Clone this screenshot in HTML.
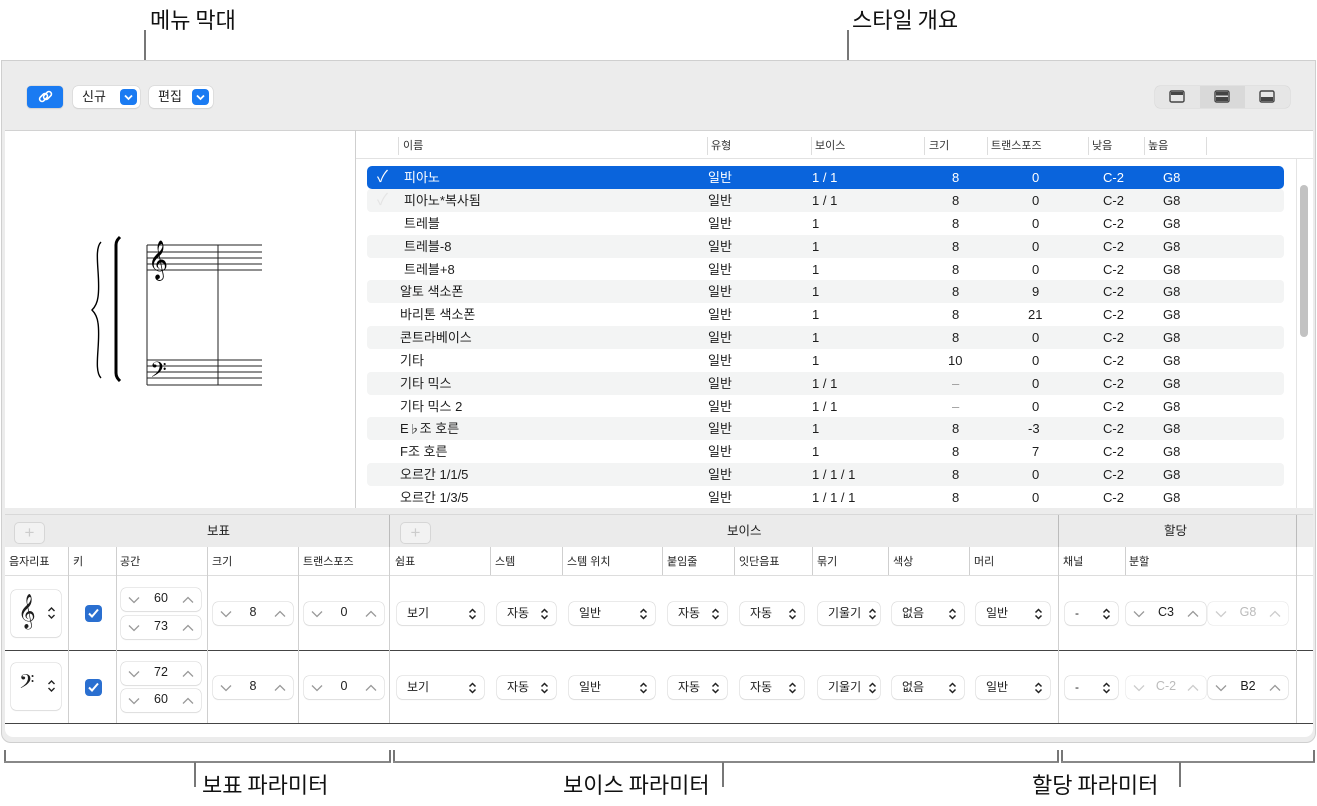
<!DOCTYPE html>
<html><head><meta charset="utf-8"><style>
*{box-sizing:border-box;margin:0;padding:0}
body{width:1317px;height:806px;background:#fff;position:relative;overflow:hidden;font-family:"Liberation Sans","Noto Sans CJK KR",sans-serif;color:#1d1d1d;font-size:12px;line-height:15px}
.a{position:absolute}
.call{position:absolute;font-size:22px;color:#111;font-family:"Noto Sans CJK KR",sans-serif;line-height:26px}
.vl{position:absolute;width:2px;background:#777}
.hl{position:absolute;height:2px;background:#888}
.win{position:absolute;left:1px;top:60px;width:1315px;height:683px;background:#ececec;border:1px solid #cfcfcf;border-radius:0 0 10px 10px}
.btn{position:absolute;background:#fff;border-radius:5px;box-shadow:0 0 0 0.5px #d0d0d0,0 1px 1px rgba(0,0,0,.12);font-size:13px;line-height:16px}
.blue{background:#1a7bf2;border-radius:4px}
.row{position:absolute;left:367px;width:917px;height:23px;font-size:13px;line-height:23px}
.row span{position:absolute;top:0}
.hd{position:absolute;top:139px;font-size:11px;color:#333;line-height:14px}
.sep{position:absolute;width:1px;background:#ddd}
.th{position:absolute;top:555px;font-size:11px;color:#222;line-height:14px}
.cv{position:absolute;width:1px;background:#cfcfcf}
.st{position:absolute;height:23px;background:#fff;border-radius:5px;box-shadow:0 0 0 0.5px #d4d4d4,0 1px 1px rgba(0,0,0,.1);font-size:12.5px;line-height:20px}
.st .v{position:absolute;width:100%;text-align:center;top:0}
.st svg{position:absolute;top:8px}
.pp{position:absolute;height:23px;background:#fff;border-radius:5px;box-shadow:0 0 0 0.5px #d4d4d4,0 1px 1px rgba(0,0,0,.1);font-size:12px;line-height:23px}
.pp .t{position:absolute;left:10px;top:0}
.pp svg{position:absolute;right:7px;top:6px}
.cb{position:absolute;width:17px;height:17px;background:#2a6fd0;border-radius:4px}
.sh{position:absolute;top:518px;font-size:12.5px;line-height:26px}
</style></head><body>

<div class="call" style="left:150px;top:6px">메뉴 막대</div>
<div class="vl" style="left:144px;top:30px;height:31px"></div>
<div class="call" style="left:852px;top:6px">스타일 개요</div>
<div class="vl" style="left:847px;top:30px;height:100px"></div>

<div class="win"></div>
<div class="btn blue" style="left:27px;top:86px;width:36px;height:22px"><svg width="36" height="22" viewBox="0 0 36 22"><g fill="none" stroke="#fff" stroke-width="1.6"><rect x="12" y="9" width="9" height="5" rx="2.5" transform="rotate(-45 16.5 11.5)"/><rect x="16" y="7" width="9" height="5" rx="2.5" transform="rotate(-45 20.5 9.5)"/></g></svg></div>
<div class="btn" style="left:73px;top:86px;width:67px;height:22px"><span class="a" style="left:9px;top:3px">신규</span><div class="a blue" style="left:47px;top:3px;width:17px;height:16px"><svg width="17" height="16"><path d="M5 6.5l3.5 3.5 3.5-3.5" stroke="#fff" stroke-width="1.8" fill="none"/></svg></div></div>
<div class="btn" style="left:149px;top:86px;width:64px;height:22px"><span class="a" style="left:9px;top:3px">편집</span><div class="a blue" style="left:43px;top:3px;width:17px;height:16px"><svg width="17" height="16"><path d="M5 6.5l3.5 3.5 3.5-3.5" stroke="#fff" stroke-width="1.8" fill="none"/></svg></div></div>
<div class="a" style="left:1155px;top:86px;width:135px;height:22px;background:#e6e6e6;border-radius:5px;box-shadow:0 0 0 0.5px #d6d6d6"></div>
<div class="a" style="left:1200px;top:86px;width:45px;height:22px;background:#d9d9d9"></div>
<svg class="a" style="left:1168px;top:89px" width="112" height="16"><g fill="none" stroke="#444" stroke-width="1.4"><rect x="2" y="2" width="14" height="11" rx="1.5"/><rect x="47" y="2" width="14" height="11" rx="1.5"/><rect x="92" y="2" width="14" height="11" rx="1.5"/></g><rect x="3" y="3" width="12" height="3" fill="#444"/><rect x="48" y="3" width="12" height="3.5" fill="#444"/><rect x="48" y="8" width="12" height="4" fill="#444"/><rect x="93" y="8" width="12" height="4" fill="#444"/></svg>

<div class="a" style="left:5px;top:130px;width:1308px;height:378px;background:#fff;border-top:1px solid #d2d2d2"></div>
<div class="a" style="left:355px;top:130px;width:1px;height:378px;background:#cfcfcf"></div>
<div class="a" style="left:356px;top:158px;width:957px;height:1px;background:#e2e2e2"></div>
<svg class="a" style="left:80px;top:225px" width="190" height="170" viewBox="0 0 190 170">
<path d="M21 17c-8 8 0 35-3 55c-1 8-5 12-6 13c1 1 5 5 6 13c3 20-5 47 3 55" fill="none" stroke="#000" stroke-width="1.4"/>
<path d="M40 12c-2 2-4 4-4 8v128c0 4 2 6 4 8" fill="none" stroke="#000" stroke-width="3"/>
<g stroke="#222" stroke-width="1"><line x1="67" y1="20" x2="67" y2="160"/><line x1="138" y1="20" x2="138" y2="160"/>
<line x1="67" y1="20" x2="182" y2="20"/><line x1="67" y1="27" x2="182" y2="27"/><line x1="67" y1="33" x2="182" y2="33"/><line x1="67" y1="39" x2="182" y2="39"/><line x1="67" y1="45" x2="182" y2="45"/>
<line x1="67" y1="135" x2="182" y2="135"/><line x1="67" y1="141" x2="182" y2="141"/><line x1="67" y1="147" x2="182" y2="147"/><line x1="67" y1="153" x2="182" y2="153"/><line x1="67" y1="160" x2="182" y2="160"/></g>
<text x="68" y="46" font-size="34" font-family="DejaVu Sans">𝄞</text>
<text x="70" y="156" font-size="26" font-family="DejaVu Sans">𝄢</text>
</svg>

<div class="hd" style="left:403px">이름</div><div class="hd" style="left:711px">유형</div><div class="hd" style="left:815px">보이스</div><div class="hd" style="left:929px">크기</div><div class="hd" style="left:991px">트랜스포즈</div><div class="hd" style="left:1092px">낮음</div><div class="hd" style="left:1148px">높음</div>
<div class="sep" style="left:398px;top:137px;height:18px"></div><div class="sep" style="left:707px;top:137px;height:18px"></div><div class="sep" style="left:811px;top:137px;height:18px"></div><div class="sep" style="left:924px;top:137px;height:18px"></div><div class="sep" style="left:987px;top:137px;height:18px"></div><div class="sep" style="left:1088px;top:137px;height:18px"></div><div class="sep" style="left:1144px;top:137px;height:18px"></div><div class="sep" style="left:1206px;top:137px;height:18px"></div>
<div class="a" style="left:1296px;top:159px;width:1px;height:349px;background:#e4e4e4"></div>
<div class="a" style="left:1300px;top:185px;width:8px;height:152px;background:#c2c2c2;border-radius:4px"></div>

<div class="row" style="top:166px;background:#0a64dc;border-radius:5px;color:#fff"><span style="left:10px;font-size:16px">✓</span><span style="left:37px">피아노</span><span style="left:341px">일반</span><span style="left:445px">1 / 1</span><span style="left:585px">8</span><span style="left:665px">0</span><span style="left:736px">C-2</span><span style="left:796px">G8</span></div>
<div class="row" style="top:189px;background:#f3f4f4;border-radius:4px"><span style="left:10px;font-size:16px;color:#e4e4e4">✓</span><span style="left:37px">피아노*복사됨</span><span style="left:341px">일반</span><span style="left:445px">1 / 1</span><span style="left:585px">8</span><span style="left:665px">0</span><span style="left:736px">C-2</span><span style="left:796px">G8</span></div>
<div class="row" style="top:212px"><span style="left:37px">트레블</span><span style="left:341px">일반</span><span style="left:445px">1</span><span style="left:585px">8</span><span style="left:665px">0</span><span style="left:736px">C-2</span><span style="left:796px">G8</span></div>
<div class="row" style="top:235px;background:#f3f4f4;border-radius:4px"><span style="left:37px">트레블-8</span><span style="left:341px">일반</span><span style="left:445px">1</span><span style="left:585px">8</span><span style="left:665px">0</span><span style="left:736px">C-2</span><span style="left:796px">G8</span></div>
<div class="row" style="top:258px"><span style="left:37px">트레블+8</span><span style="left:341px">일반</span><span style="left:445px">1</span><span style="left:585px">8</span><span style="left:665px">0</span><span style="left:736px">C-2</span><span style="left:796px">G8</span></div>
<div class="row" style="top:280px;background:#f3f4f4;border-radius:4px"><span style="left:33px">알토 색소폰</span><span style="left:341px">일반</span><span style="left:445px">1</span><span style="left:585px">8</span><span style="left:665px">9</span><span style="left:736px">C-2</span><span style="left:796px">G8</span></div>
<div class="row" style="top:303px"><span style="left:33px">바리톤 색소폰</span><span style="left:341px">일반</span><span style="left:445px">1</span><span style="left:585px">8</span><span style="left:661px">21</span><span style="left:736px">C-2</span><span style="left:796px">G8</span></div>
<div class="row" style="top:326px;background:#f3f4f4;border-radius:4px"><span style="left:33px">콘트라베이스</span><span style="left:341px">일반</span><span style="left:445px">1</span><span style="left:585px">8</span><span style="left:665px">0</span><span style="left:736px">C-2</span><span style="left:796px">G8</span></div>
<div class="row" style="top:349px"><span style="left:33px">기타</span><span style="left:341px">일반</span><span style="left:445px">1</span><span style="left:581px">10</span><span style="left:665px">0</span><span style="left:736px">C-2</span><span style="left:796px">G8</span></div>
<div class="row" style="top:372px;background:#f3f4f4;border-radius:4px"><span style="left:33px">기타 믹스</span><span style="left:341px">일반</span><span style="left:445px">1 / 1</span><span style="left:585px;color:#999">–</span><span style="left:665px">0</span><span style="left:736px">C-2</span><span style="left:796px">G8</span></div>
<div class="row" style="top:395px"><span style="left:33px">기타 믹스 2</span><span style="left:341px">일반</span><span style="left:445px">1 / 1</span><span style="left:585px;color:#999">–</span><span style="left:665px">0</span><span style="left:736px">C-2</span><span style="left:796px">G8</span></div>
<div class="row" style="top:417px;background:#f3f4f4;border-radius:4px"><span style="left:33px">E<span style="position:static;font-size:11px">♭</span>조 호른</span><span style="left:341px">일반</span><span style="left:445px">1</span><span style="left:585px">8</span><span style="left:661px">-3</span><span style="left:736px">C-2</span><span style="left:796px">G8</span></div>
<div class="row" style="top:440px"><span style="left:33px">F조 호른</span><span style="left:341px">일반</span><span style="left:445px">1</span><span style="left:585px">8</span><span style="left:665px">7</span><span style="left:736px">C-2</span><span style="left:796px">G8</span></div>
<div class="row" style="top:463px;background:#f3f4f4;border-radius:4px"><span style="left:33px">오르간 1/1/5</span><span style="left:341px">일반</span><span style="left:445px">1 / 1 / 1</span><span style="left:585px">8</span><span style="left:665px">0</span><span style="left:736px">C-2</span><span style="left:796px">G8</span></div>
<div class="row" style="top:486px"><span style="left:33px">오르간 1/3/5</span><span style="left:341px">일반</span><span style="left:445px">1 / 1 / 1</span><span style="left:585px">8</span><span style="left:665px">0</span><span style="left:736px">C-2</span><span style="left:796px">G8</span></div>

<div class="a" style="left:5px;top:508px;width:1308px;height:7px;background:#ececec;border-bottom:1px solid #d8d8d8"></div>
<div class="a" style="left:5px;top:515px;width:1308px;height:32px;background:#ebebeb"></div>
<div class="a" style="left:5px;top:547px;width:1308px;height:190px;background:#fff;border-radius:0 0 8px 8px"></div>
<div class="a" style="left:14px;top:522px;width:31px;height:22px;border:1px solid #d6d6d6;border-radius:5px;background:#f2f2f2;color:#ccc;text-align:center;font-size:17px;line-height:19px">+</div>
<div class="a" style="left:400px;top:522px;width:31px;height:22px;border:1px solid #d6d6d6;border-radius:5px;background:#f2f2f2;color:#ccc;text-align:center;font-size:17px;line-height:19px">+</div>
<div class="sh" style="left:207px">보표</div>
<div class="sh" style="left:727px">보이스</div>
<div class="sh" style="left:1164px">할당</div>
<div class="cv" style="left:389px;top:515px;height:32px;background:#bbb"></div>
<div class="cv" style="left:1058px;top:515px;height:32px;background:#bbb"></div>
<div class="cv" style="left:1296px;top:515px;height:32px;background:#bbb"></div>
<div class="a" style="left:5px;top:575px;width:1308px;height:1px;background:#ddd"></div>
<div class="a" style="left:5px;top:650px;width:1308px;height:1px;background:#444"></div>
<div class="a" style="left:5px;top:723px;width:1308px;height:1px;background:#444"></div>
<div class="cv" style="left:68px;top:547px;height:176px"></div><div class="cv" style="left:116px;top:547px;height:176px"></div><div class="cv" style="left:207px;top:547px;height:176px"></div><div class="cv" style="left:298px;top:547px;height:176px"></div><div class="cv" style="left:389px;top:547px;height:176px"></div><div class="cv" style="left:1058px;top:547px;height:176px"></div><div class="cv" style="left:1296px;top:547px;height:176px"></div>
<div class="cv" style="left:490px;top:547px;height:28px"></div><div class="cv" style="left:562px;top:547px;height:28px"></div><div class="cv" style="left:662px;top:547px;height:28px"></div><div class="cv" style="left:734px;top:547px;height:28px"></div><div class="cv" style="left:812px;top:547px;height:28px"></div><div class="cv" style="left:888px;top:547px;height:28px"></div><div class="cv" style="left:969px;top:547px;height:28px"></div><div class="cv" style="left:1125px;top:547px;height:28px"></div>
<div class="th" style="left:9px">음자리표</div><div class="th" style="left:73px">키</div><div class="th" style="left:120px">공간</div><div class="th" style="left:212px">크기</div><div class="th" style="left:303px">트랜스포즈</div><div class="th" style="left:395px">쉼표</div><div class="th" style="left:495px">스템</div><div class="th" style="left:567px">스템 위치</div><div class="th" style="left:667px">붙임줄</div><div class="th" style="left:739px">잇단음표</div><div class="th" style="left:817px">묶기</div><div class="th" style="left:893px">색상</div><div class="th" style="left:974px">머리</div><div class="th" style="left:1063px">채널</div><div class="th" style="left:1129px">분할</div>

<div class="pp" style="left:11px;top:590px;width:50px;height:47px"><span class="a" style="left:7px;top:4px;font-size:30px;line-height:36px;font-family:'DejaVu Sans'">𝄞</span><svg width="9" height="14" style="top:16px;right:5px"><path d="M1.5 5l3-3 3 3M1.5 9l3 3 3-3" stroke="#222" stroke-width="1.4" fill="none"/></svg></div>
<div class="pp" style="left:11px;top:663px;width:50px;height:47px"><span class="a" style="left:8px;top:6px;font-size:24px;line-height:30px;font-family:'DejaVu Sans'">𝄢</span><svg width="9" height="14" style="top:16px;right:5px"><path d="M1.5 5l3-3 3 3M1.5 9l3 3 3-3" stroke="#222" stroke-width="1.4" fill="none"/></svg></div>
<div class="cb" style="left:85px;top:605px"><svg width="17" height="17"><path d="M4 8.5l3 3 6-7" stroke="#fff" stroke-width="2" fill="none"/></svg></div>
<div class="cb" style="left:85px;top:679px"><svg width="17" height="17"><path d="M4 8.5l3 3 6-7" stroke="#fff" stroke-width="2" fill="none"/></svg></div>

<div class="st" style="left:121px;top:588px;width:80px"><svg style="left:7px" width="12" height="8"><path d="M1 1.5l5 5 5-5" stroke="#999" stroke-width="1.3" fill="none"/></svg><span class="v">60</span><svg style="right:7px" width="12" height="8"><path d="M1 6.5l5-5 5 5" stroke="#999" stroke-width="1.3" fill="none"/></svg></div>
<div class="st" style="left:121px;top:616px;width:80px"><svg style="left:7px" width="12" height="8"><path d="M1 1.5l5 5 5-5" stroke="#999" stroke-width="1.3" fill="none"/></svg><span class="v">73</span><svg style="right:7px" width="12" height="8"><path d="M1 6.5l5-5 5 5" stroke="#999" stroke-width="1.3" fill="none"/></svg></div>
<div class="st" style="left:121px;top:662px;width:80px"><svg style="left:7px" width="12" height="8"><path d="M1 1.5l5 5 5-5" stroke="#999" stroke-width="1.3" fill="none"/></svg><span class="v">72</span><svg style="right:7px" width="12" height="8"><path d="M1 6.5l5-5 5 5" stroke="#999" stroke-width="1.3" fill="none"/></svg></div>
<div class="st" style="left:121px;top:689px;width:80px"><svg style="left:7px" width="12" height="8"><path d="M1 1.5l5 5 5-5" stroke="#999" stroke-width="1.3" fill="none"/></svg><span class="v">60</span><svg style="right:7px" width="12" height="8"><path d="M1 6.5l5-5 5 5" stroke="#999" stroke-width="1.3" fill="none"/></svg></div>
<div class="st" style="left:213px;top:602px;width:80px"><svg style="left:7px" width="12" height="8"><path d="M1 1.5l5 5 5-5" stroke="#999" stroke-width="1.3" fill="none"/></svg><span class="v">8</span><svg style="right:7px" width="12" height="8"><path d="M1 6.5l5-5 5 5" stroke="#999" stroke-width="1.3" fill="none"/></svg></div>
<div class="st" style="left:213px;top:676px;width:80px"><svg style="left:7px" width="12" height="8"><path d="M1 1.5l5 5 5-5" stroke="#999" stroke-width="1.3" fill="none"/></svg><span class="v">8</span><svg style="right:7px" width="12" height="8"><path d="M1 6.5l5-5 5 5" stroke="#999" stroke-width="1.3" fill="none"/></svg></div>
<div class="st" style="left:304px;top:602px;width:80px"><svg style="left:7px" width="12" height="8"><path d="M1 1.5l5 5 5-5" stroke="#999" stroke-width="1.3" fill="none"/></svg><span class="v">0</span><svg style="right:7px" width="12" height="8"><path d="M1 6.5l5-5 5 5" stroke="#999" stroke-width="1.3" fill="none"/></svg></div>
<div class="st" style="left:304px;top:676px;width:80px"><svg style="left:7px" width="12" height="8"><path d="M1 1.5l5 5 5-5" stroke="#999" stroke-width="1.3" fill="none"/></svg><span class="v">0</span><svg style="right:7px" width="12" height="8"><path d="M1 6.5l5-5 5 5" stroke="#999" stroke-width="1.3" fill="none"/></svg></div>

<div class="pp" style="left:397px;top:602px;width:87px"><span class="t">보기</span><svg width="9" height="12"><path d="M1.5 4.5l3-3 3 3M1.5 7.5l3 3 3-3" stroke="#222" stroke-width="1.5" fill="none"/></svg></div>
<div class="pp" style="left:497px;top:602px;width:59px"><span class="t">자동</span><svg width="9" height="12"><path d="M1.5 4.5l3-3 3 3M1.5 7.5l3 3 3-3" stroke="#222" stroke-width="1.5" fill="none"/></svg></div>
<div class="pp" style="left:569px;top:602px;width:86px"><span class="t">일반</span><svg width="9" height="12"><path d="M1.5 4.5l3-3 3 3M1.5 7.5l3 3 3-3" stroke="#222" stroke-width="1.5" fill="none"/></svg></div>
<div class="pp" style="left:668px;top:602px;width:59px"><span class="t">자동</span><svg width="9" height="12"><path d="M1.5 4.5l3-3 3 3M1.5 7.5l3 3 3-3" stroke="#222" stroke-width="1.5" fill="none"/></svg></div>
<div class="pp" style="left:740px;top:602px;width:64px"><span class="t">자동</span><svg width="9" height="12"><path d="M1.5 4.5l3-3 3 3M1.5 7.5l3 3 3-3" stroke="#222" stroke-width="1.5" fill="none"/></svg></div>
<div class="pp" style="left:818px;top:602px;width:62px"><span class="t">기울기</span><svg width="9" height="12" style="right:3px"><path d="M1.5 4.5l3-3 3 3M1.5 7.5l3 3 3-3" stroke="#222" stroke-width="1.5" fill="none"/></svg></div>
<div class="pp" style="left:892px;top:602px;width:72px"><span class="t">없음</span><svg width="9" height="12"><path d="M1.5 4.5l3-3 3 3M1.5 7.5l3 3 3-3" stroke="#222" stroke-width="1.5" fill="none"/></svg></div>
<div class="pp" style="left:976px;top:602px;width:74px"><span class="t">일반</span><svg width="9" height="12"><path d="M1.5 4.5l3-3 3 3M1.5 7.5l3 3 3-3" stroke="#222" stroke-width="1.5" fill="none"/></svg></div>
<div class="pp" style="left:1065px;top:602px;width:53px"><span class="t">-</span><svg width="9" height="12"><path d="M1.5 4.5l3-3 3 3M1.5 7.5l3 3 3-3" stroke="#222" stroke-width="1.5" fill="none"/></svg></div>
<div class="st" style="left:1126px;top:602px;width:80px"><svg style="left:7px" width="12" height="8"><path d="M1 1.5l5 5 5-5" stroke="#999" stroke-width="1.3" fill="none"/></svg><span class="v">C3</span><svg style="right:7px" width="12" height="8"><path d="M1 6.5l5-5 5 5" stroke="#999" stroke-width="1.3" fill="none"/></svg></div>
<div class="st" style="left:1208px;top:602px;width:80px;color:#bbb;box-shadow:0 0 0 0.5px #e4e4e4"><svg style="left:7px" width="12" height="8"><path d="M1 1.5l5 5 5-5" stroke="#ccc" stroke-width="1.3" fill="none"/></svg><span class="v">G8</span><svg style="right:7px" width="12" height="8"><path d="M1 6.5l5-5 5 5" stroke="#ccc" stroke-width="1.3" fill="none"/></svg></div>
<div class="pp" style="left:397px;top:676px;width:87px"><span class="t">보기</span><svg width="9" height="12"><path d="M1.5 4.5l3-3 3 3M1.5 7.5l3 3 3-3" stroke="#222" stroke-width="1.5" fill="none"/></svg></div>
<div class="pp" style="left:497px;top:676px;width:59px"><span class="t">자동</span><svg width="9" height="12"><path d="M1.5 4.5l3-3 3 3M1.5 7.5l3 3 3-3" stroke="#222" stroke-width="1.5" fill="none"/></svg></div>
<div class="pp" style="left:569px;top:676px;width:86px"><span class="t">일반</span><svg width="9" height="12"><path d="M1.5 4.5l3-3 3 3M1.5 7.5l3 3 3-3" stroke="#222" stroke-width="1.5" fill="none"/></svg></div>
<div class="pp" style="left:668px;top:676px;width:59px"><span class="t">자동</span><svg width="9" height="12"><path d="M1.5 4.5l3-3 3 3M1.5 7.5l3 3 3-3" stroke="#222" stroke-width="1.5" fill="none"/></svg></div>
<div class="pp" style="left:740px;top:676px;width:64px"><span class="t">자동</span><svg width="9" height="12"><path d="M1.5 4.5l3-3 3 3M1.5 7.5l3 3 3-3" stroke="#222" stroke-width="1.5" fill="none"/></svg></div>
<div class="pp" style="left:818px;top:676px;width:62px"><span class="t">기울기</span><svg width="9" height="12" style="right:3px"><path d="M1.5 4.5l3-3 3 3M1.5 7.5l3 3 3-3" stroke="#222" stroke-width="1.5" fill="none"/></svg></div>
<div class="pp" style="left:892px;top:676px;width:72px"><span class="t">없음</span><svg width="9" height="12"><path d="M1.5 4.5l3-3 3 3M1.5 7.5l3 3 3-3" stroke="#222" stroke-width="1.5" fill="none"/></svg></div>
<div class="pp" style="left:976px;top:676px;width:74px"><span class="t">일반</span><svg width="9" height="12"><path d="M1.5 4.5l3-3 3 3M1.5 7.5l3 3 3-3" stroke="#222" stroke-width="1.5" fill="none"/></svg></div>
<div class="pp" style="left:1065px;top:676px;width:53px"><span class="t">-</span><svg width="9" height="12"><path d="M1.5 4.5l3-3 3 3M1.5 7.5l3 3 3-3" stroke="#222" stroke-width="1.5" fill="none"/></svg></div>
<div class="st" style="left:1126px;top:676px;width:80px;color:#bbb;box-shadow:0 0 0 0.5px #e4e4e4"><svg style="left:7px" width="12" height="8"><path d="M1 1.5l5 5 5-5" stroke="#ccc" stroke-width="1.3" fill="none"/></svg><span class="v">C-2</span><svg style="right:7px" width="12" height="8"><path d="M1 6.5l5-5 5 5" stroke="#ccc" stroke-width="1.3" fill="none"/></svg></div>
<div class="st" style="left:1208px;top:676px;width:80px"><svg style="left:7px" width="12" height="8"><path d="M1 1.5l5 5 5-5" stroke="#999" stroke-width="1.3" fill="none"/></svg><span class="v">B2</span><svg style="right:7px" width="12" height="8"><path d="M1 6.5l5-5 5 5" stroke="#999" stroke-width="1.3" fill="none"/></svg></div>

<div class="vl" style="left:4px;top:750px;height:12px"></div><div class="hl" style="left:4px;top:761px;width:387px"></div><div class="vl" style="left:389px;top:750px;height:12px"></div>
<div class="vl" style="left:393px;top:750px;height:12px"></div><div class="hl" style="left:393px;top:761px;width:666px"></div><div class="vl" style="left:1057px;top:750px;height:12px"></div>
<div class="vl" style="left:1061px;top:750px;height:12px"></div><div class="hl" style="left:1061px;top:761px;width:254px"></div><div class="vl" style="left:1313px;top:750px;height:12px"></div>
<div class="vl" style="left:194px;top:762px;height:25px"></div><div class="call" style="left:202px;top:771px">보표 파라미터</div>
<div class="vl" style="left:722px;top:762px;height:25px"></div><div class="call" style="left:563px;top:771px">보이스 파라미터</div>
<div class="vl" style="left:1179px;top:762px;height:25px"></div><div class="call" style="left:1032px;top:771px">할당 파라미터</div>
</body></html>
